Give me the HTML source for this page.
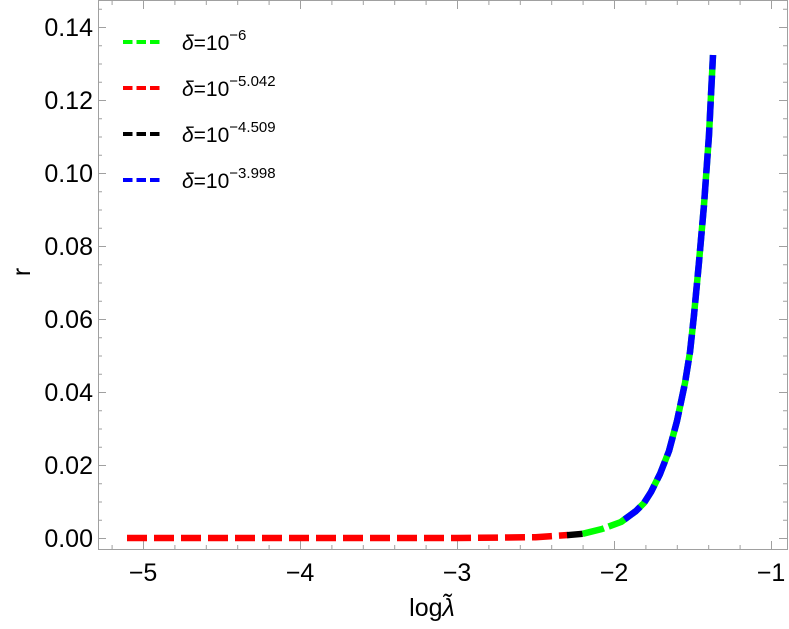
<!DOCTYPE html>
<html><head><style>
html,body{margin:0;padding:0;background:#fff;}
svg{display:block;font-family:"Liberation Sans",sans-serif;}
</style></head><body>
<svg width="789" height="629" viewBox="0 0 789 629" xmlns="http://www.w3.org/2000/svg">
<rect x="98.5" y="0.5" width="689" height="549" fill="#fff" stroke="#a0a0a0" stroke-width="1"/>
<g stroke="#a0a0a0" stroke-width="1">
<path d="M143.5 549v-8M300.5 549v-8M457.5 549v-8M614.5 549v-8M771.5 549v-8M143.5 1v8M300.5 1v8M457.5 1v8M614.5 1v8M771.5 1v8"/>
<path d="M112.1 549v-4M174.9 549v-4M206.3 549v-4M237.7 549v-4M269.1 549v-4M331.9 549v-4M363.3 549v-4M394.7 549v-4M426.1 549v-4M488.9 549v-4M520.3 549v-4M551.7 549v-4M583.1 549v-4M645.9 549v-4M677.3 549v-4M708.7 549v-4M740.1 549v-4
M112.1 1v4M174.9 1v4M206.3 1v4M237.7 1v4M269.1 1v4M331.9 1v4M363.3 1v4M394.7 1v4M426.1 1v4M488.9 1v4M520.3 1v4M551.7 1v4M583.1 1v4M645.9 1v4M677.3 1v4M708.7 1v4M740.1 1v4"/>
<path d="M98 538.5h8M98 465.5h8M98 392.5h8M98 319.5h8M98 246.5h8M98 173.5h8M98 100.5h8M98 27.5h8
M787 538.5h-8M787 465.5h-8M787 392.5h-8M787 319.5h-8M787 246.5h-8M787 173.5h-8M787 100.5h-8M787 27.5h-8"/>
<path d="M98 520.2h4M98 502h4M98 483.7h4M98 447.2h4M98 429h4M98 410.7h4M98 374.2h4M98 356h4M98 337.7h4M98 301.2h4M98 283h4M98 264.7h4M98 228.2h4M98 210h4M98 191.7h4M98 155.2h4M98 137h4M98 118.7h4M98 82.2h4M98 64h4M98 45.7h4M98 9.2h4
M787 520.2h-4M787 502h-4M787 483.7h-4M787 447.2h-4M787 429h-4M787 410.7h-4M787 374.2h-4M787 356h-4M787 337.7h-4M787 301.2h-4M787 283h-4M787 264.7h-4M787 228.2h-4M787 210h-4M787 191.7h-4M787 155.2h-4M787 137h-4M787 118.7h-4M787 82.2h-4M787 64h-4M787 45.7h-4M787 9.2h-4"/>
</g>
<g font-size="25" fill="#000" text-anchor="end">
<text x="93" y="547">0.00</text>
<text x="93" y="474">0.02</text>
<text x="93" y="401">0.04</text>
<text x="93" y="328">0.06</text>
<text x="93" y="255">0.08</text>
<text x="93" y="182">0.10</text>
<text x="93" y="109">0.12</text>
<text x="93" y="36">0.14</text>
</g>
<g font-size="25" fill="#000" text-anchor="middle">
<text x="143" y="581">−5</text>
<text x="300" y="581">−4</text>
<text x="457" y="581">−3</text>
<text x="614" y="581">−2</text>
<text x="771" y="581">−1</text>
</g>
<text x="432" y="616" font-size="25" text-anchor="middle">log<tspan font-style="italic">λ̃</tspan></text>
<text x="24" y="278" font-size="25" text-anchor="middle" transform="rotate(-90 24 272)">r</text>
<g fill="none" stroke-width="6.5" stroke-linejoin="round">
<path d="M127 538 L457 538 L535.5 537.2 L568 535" stroke="#ff0000" stroke-dasharray="20 7"/>
<path d="M567 535.2 L582.6 533.8" stroke="#000"/>
<path d="M582.6 533.8 L602 529 L621 522 L636 511" stroke="#00ff00" stroke-dasharray="22 5"/>
<path d="M621 522 L636 511 L644 503 L651 492 L660 474 L669 451 L677 421 L685 383 L690 352 L694 315 L699 262 L704 205 L709 135 L713 55" stroke="#00ff00"/>
<path d="M623 520.5 L636 511 L644 503 L651 492 L660 474 L669 451 L677 421 L685 383 L690 352 L694 315 L699 262 L704 205 L709 135 L713 55" stroke="#0000ff" stroke-dasharray="20 6" stroke-dashoffset="-2"/>
</g>
<g stroke-width="4" stroke-dasharray="9.5 4">
<line x1="123" y1="42" x2="163" y2="42" stroke="#00ff00"/>
<line x1="123" y1="88" x2="163" y2="88" stroke="#ff0000"/>
<line x1="123" y1="134" x2="163" y2="134" stroke="#000"/>
<line x1="123" y1="180" x2="163" y2="180" stroke="#0000ff"/>
</g>
<g font-size="21" fill="#000">
<text x="182" y="50"><tspan font-style="italic">δ</tspan>=10<tspan font-size="15" dy="-10">−6</tspan></text>
<text x="182" y="96"><tspan font-style="italic">δ</tspan>=10<tspan font-size="15" dy="-10">−5.042</tspan></text>
<text x="182" y="142"><tspan font-style="italic">δ</tspan>=10<tspan font-size="15" dy="-10">−4.509</tspan></text>
<text x="182" y="188"><tspan font-style="italic">δ</tspan>=10<tspan font-size="15" dy="-10">−3.998</tspan></text>
</g>
</svg>
</body></html>
